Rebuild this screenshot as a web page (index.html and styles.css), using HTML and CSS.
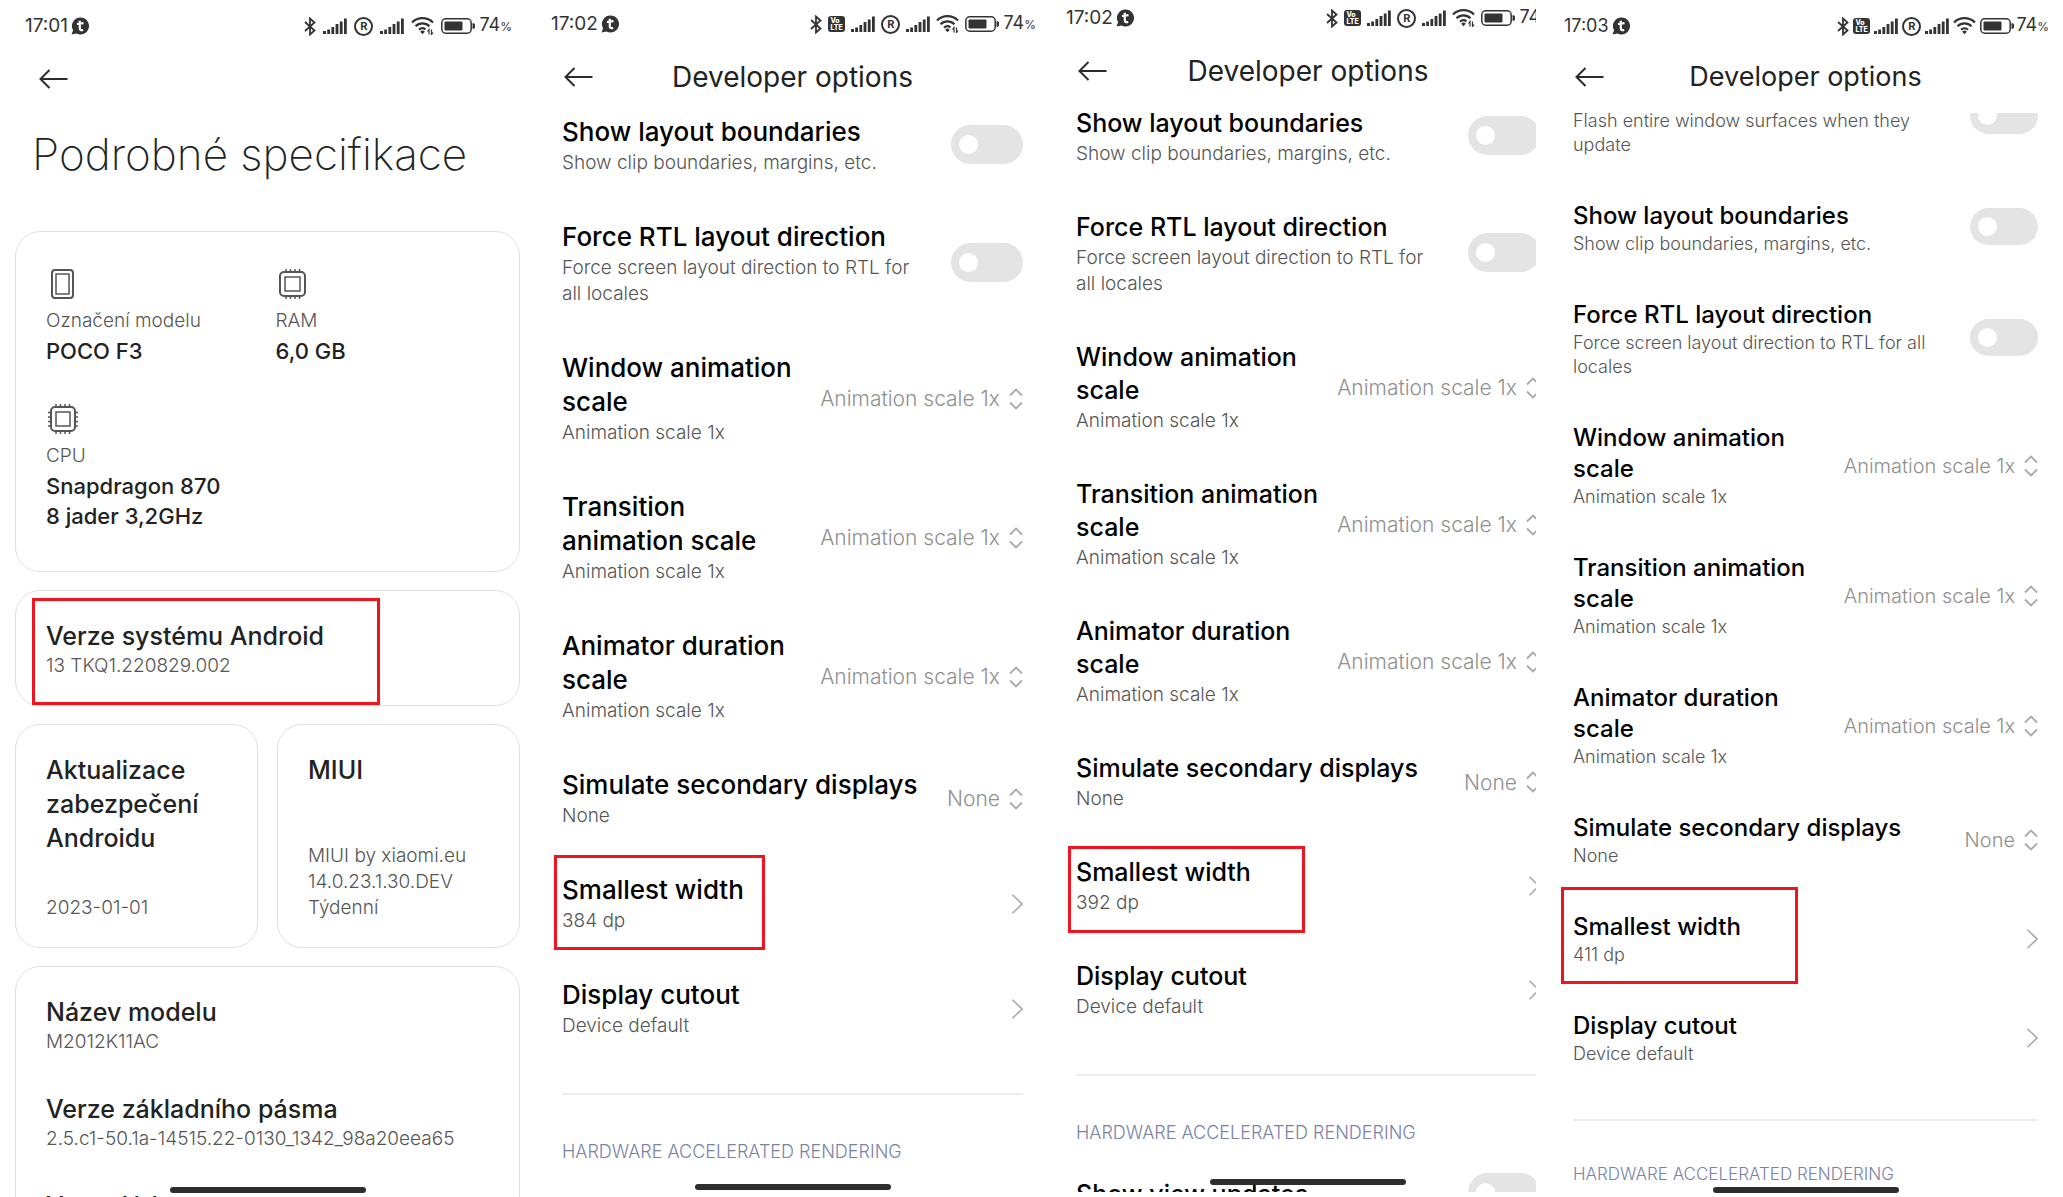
FILE: index.html
```
<!DOCTYPE html>
<html lang="en">
<head>
    <meta charset="UTF-8">
    <meta name="viewport" content="width=device-width, initial-scale=1.0">
    <title>Developer options</title>
    <link rel="stylesheet" href="styles.css">
</head>

<body>
    <!-- shared icons -->
    <svg class="sprite" aria-hidden="true">
        <symbol id="chat" viewBox="0 0 18 18">
            <path d="M9.500 0.500a8.500 8.500 0 1 1-4 16L0.500 17.500l1.600-4.200A8.500 8.500 0 0 1 9.500 0.500z" fill="#333"/>
            <path d="M8.800 3.800v7.700q0 2.200 3.400 1.500M6 7l6.500-0.800" fill="none" stroke="#fff" stroke-width="2.200"/>
        </symbol>
        <symbol id="bluetooth" viewBox="0 0 12 19">
            <path d="M1 5l9.500 8.500L6 17.500v-16l4.500 4L1 14" fill="none" stroke="#333" stroke-width="1.800"/>
        </symbol>
        <symbol id="signal" viewBox="0 0 24 16">
            <path d="M0 13h3v3H0zM4.200 11.500h2.800V16H4.200zM8.400 9h2.800v7H8.400zM12.600 6h2.800v10h-2.800zM16.800 3.500h2.800V16h-2.800zM21 0.500h2.800V16H21z" fill="#333"/>
        </symbol>
        <symbol id="wifi" viewBox="0 0 23 18">
            <path d="M1 5.500a15 15 0 0 1 21 0M4.500 9.300a10 10 0 0 1 14 0M8 12.800a5.200 5.200 0 0 1 7 0" fill="none" stroke="#333" stroke-width="2.200"/>
            <path d="M9.200 14.800a3.200 3.200 0 0 1 4.600 0l-2.300 2.400z" fill="#333"/>
        </symbol>
        <symbol id="wifi-data" viewBox="0 0 23 18">
            <path d="M1 5.500a15 15 0 0 1 21 0M4.500 9.300a10 10 0 0 1 14 0M8 12.800a5.200 5.200 0 0 1 6.500-0.500" fill="none" stroke="#333" stroke-width="2.200"/>
            <path d="M9.200 14.800a3.200 3.200 0 0 1 4.600 0l-2.300 2.400z" fill="#333"/>
            <path d="M18 17.500v-5l-1.500 2M20.500 12.500v5l1.500-2" fill="none" stroke="#333" stroke-width="1.200"/>
        </symbol>
        <symbol id="battery" viewBox="0 0 34 16">
            <rect x="0.800" y="0.800" width="29.400" height="14.400" rx="4" fill="none" stroke="#333" stroke-width="1.500"/>
            <rect x="3.500" y="3.500" width="18" height="9" rx="1" fill="#333"/>
            <path d="M32 5.500a2 2.500 0 0 1 0 5z" fill="#333" stroke="#333"/>
        </symbol>
        <symbol id="back" viewBox="0 0 29 20">
            <path d="M10.500 1L1.500 10l9 9M1.500 10h27" fill="none" stroke="#2b2b2b" stroke-width="2"/>
        </symbol>
        <symbol id="updown" viewBox="0 0 14 22">
            <path d="M1 7.500l6-6 6 6M1 14.500l6 6 6-6" fill="none" stroke="#aaa" stroke-width="1.800"/>
        </symbol>
        <symbol id="next" viewBox="0 0 12 20">
            <path d="M1.500 0.800L11 10l-9.500 9.200" fill="none" stroke="#aaa" stroke-width="1.600"/>
        </symbol>
    </svg>

    <main class="screens">
        <!-- About phone -->
        <section class="screen about" lang="cs">
            <div class="status">
                <span class="time">17:01</span>
                <svg class="i-chat"><use href="#chat"/></svg>
                <div class="status-icons">
                    <svg class="i-bt"><use href="#bluetooth"/></svg>
                    <svg class="i-signal"><use href="#signal"/></svg>
                    <span class="roaming">R</span>
                    <svg class="i-signal"><use href="#signal"/></svg>
                    <svg class="i-wifi"><use href="#wifi-data"/></svg>
                    <svg class="i-battery"><use href="#battery"/></svg>
                </div>
                <span class="percent">74<small>%</small></span>
            </div>
            <header class="appbar">
                <button class="back" aria-label="Zpět"><svg><use href="#back"/></svg></button>
            </header>
            <h1 class="page-title">Podrobné specifikace</h1>

            <div class="cards">
                <div class="card specs">
                    <div class="spec">
                        <svg class="spec-icon" viewBox="0 0 32 30">
                            <rect x="6" y="1" width="21" height="28" rx="3" fill="none" stroke="#555" stroke-width="2"/>
                            <rect x="10" y="5" width="13" height="20" fill="none" stroke="#555" stroke-width="1.500"/>
                        </svg>
                        <p class="spec-label">Označení modelu</p>
                        <p class="spec-value">POCO F3</p>
                    </div>
                    <div class="spec">
                        <svg class="spec-icon" viewBox="0 0 32 30">
                            <rect x="4" y="3" width="25" height="24" rx="4" fill="none" stroke="#555" stroke-width="2"/>
                            <rect x="9" y="8" width="15" height="14" fill="none" stroke="#555" stroke-width="1.500"/>
                            <path d="M10 0v3M14.500 0v3M19 0v3M23.500 0v3M10 27v3M14.500 27v3M19 27v3M23.500 27v3" stroke="#555" stroke-width="1.500"/>
                        </svg>
                        <p class="spec-label">RAM</p>
                        <p class="spec-value">6,0 GB</p>
                    </div>
                    <div class="spec">
                        <svg class="spec-icon" viewBox="0 0 32 30">
                            <rect x="5" y="3" width="24" height="24" rx="4" fill="none" stroke="#555" stroke-width="2"/>
                            <rect x="10" y="8" width="14" height="14" fill="none" stroke="#555" stroke-width="1.500"/>
                            <path d="M10 0v3M14.500 0v3M19 0v3M23.500 0v3M10 27v3M14.500 27v3M19 27v3M23.500 27v3M2 8.500h3M2 13h3M2 17.500h3M2 22h3M29 8.500h3M29 13h3M29 17.500h3M29 22h3" stroke="#555" stroke-width="1.500"/>
                        </svg>
                        <p class="spec-label">CPU</p>
                        <p class="spec-value">Snapdragon 870<br>8 jader 3,2GHz</p>
                    </div>
                </div>
                <div class="card marked">
                    <h2 class="title">Verze systému Android</h2>
                    <p class="sub">13 TKQ1.220829.002</p>
                </div>
                <div class="card-pair">
                    <div class="card">
                        <h2 class="title">Aktualizace zabezpečení Androidu</h2>
                        <p class="sub">2023-01-01</p>
                    </div>
                    <div class="card">
                        <h2 class="title">MIUI</h2>
                        <p class="sub">MIUI by xiaomi.eu<br>14.0.23.1.30.DEV<br>Týdenní</p>
                    </div>
                </div>
                <div class="card info">
                    <div>
                        <h2 class="title">Název modelu</h2>
                        <p class="sub">M2012K11AC</p>
                    </div>
                    <div>
                        <h2 class="title">Verze základního pásma</h2>
                        <p class="sub">2.5.c1-50.1a-14515.22-0130_1342_98a20eea65</p>
                    </div>
                    <div>
                        <h2 class="title">Verze jádra</h2>
                    </div>
                </div>
            </div>
            <div class="home"></div>
        </section>

        <!-- 384 dp -->
        <section class="screen dp384">
            <div class="status">
                <span class="time">17:02</span>
                <svg class="i-chat"><use href="#chat"/></svg>
                <div class="status-icons">
                    <svg class="i-bt"><use href="#bluetooth"/></svg>
                    <span class="volte"><span>Vo</span><span>LTE</span></span>
                    <svg class="i-signal"><use href="#signal"/></svg>
                    <span class="roaming">R</span>
                    <svg class="i-signal"><use href="#signal"/></svg>
                    <svg class="i-wifi"><use href="#wifi-data"/></svg>
                    <svg class="i-battery"><use href="#battery"/></svg>
                </div>
                <span class="percent">74<small>%</small></span>
            </div>
            <header class="appbar">
                <button class="back" aria-label="Back"><svg><use href="#back"/></svg></button>
                <h1 class="bar-title">Developer options</h1>
            </header>
            <div class="viewport">
                <div class="list">
                    <label class="row">
                        <span class="row-text"><span class="title">Show layout boundaries</span><span class="sub">Show clip boundaries, margins, etc.</span></span>
                        <input type="checkbox" class="switch">
                    </label>
                    <label class="row">
                        <span class="row-text"><span class="title">Force RTL layout direction</span><span class="sub">Force screen layout direction to RTL for all locales</span></span>
                        <input type="checkbox" class="switch">
                    </label>
                    <label class="row">
                        <span class="row-text"><span class="title">Window animation scale</span><span class="sub">Animation scale 1x</span></span>
                        <select class="value"><option>Animation scale 1x</option></select>
                        <svg class="updown"><use href="#updown"/></svg>
                    </label>
                    <label class="row">
                        <span class="row-text"><span class="title">Transition animation scale</span><span class="sub">Animation scale 1x</span></span>
                        <select class="value"><option>Animation scale 1x</option></select>
                        <svg class="updown"><use href="#updown"/></svg>
                    </label>
                    <label class="row">
                        <span class="row-text"><span class="title">Animator duration scale</span><span class="sub">Animation scale 1x</span></span>
                        <select class="value"><option>Animation scale 1x</option></select>
                        <svg class="updown"><use href="#updown"/></svg>
                    </label>
                    <label class="row">
                        <span class="row-text"><span class="title">Simulate secondary displays</span><span class="sub">None</span></span>
                        <select class="value"><option>None</option></select>
                        <svg class="updown"><use href="#updown"/></svg>
                    </label>
                    <a class="row marked" href="#">
                        <span class="row-text"><span class="title">Smallest width</span><span class="sub">384 dp</span></span>
                        <svg class="next"><use href="#next"/></svg>
                    </a>
                    <a class="row" href="#">
                        <span class="row-text"><span class="title">Display cutout</span><span class="sub">Device default</span></span>
                        <svg class="next"><use href="#next"/></svg>
                    </a>
                    <h2 class="group">HARDWARE ACCELERATED RENDERING</h2>
                </div>
            </div>
            <div class="home"></div>
        </section>

        <!-- 392 dp, runs off the right side -->
        <section class="screen dp392">
            <div class="inner">
                <div class="status">
                    <span class="time">17:02</span>
                    <svg class="i-chat"><use href="#chat"/></svg>
                    <div class="status-icons">
                        <svg class="i-bt"><use href="#bluetooth"/></svg>
                        <span class="volte"><span>Vo</span><span>LTE</span></span>
                        <svg class="i-signal"><use href="#signal"/></svg>
                        <span class="roaming">R</span>
                        <svg class="i-signal"><use href="#signal"/></svg>
                        <svg class="i-wifi"><use href="#wifi-data"/></svg>
                        <svg class="i-battery"><use href="#battery"/></svg>
                    </div>
                    <span class="percent">74<small>%</small></span>
                </div>
                <header class="appbar">
                    <button class="back" aria-label="Back"><svg><use href="#back"/></svg></button>
                    <h1 class="bar-title">Developer options</h1>
                </header>
                <div class="viewport">
                    <div class="list">
                        <label class="row">
                            <span class="row-text"><span class="title">Show layout boundaries</span><span class="sub">Show clip boundaries, margins, etc.</span></span>
                            <input type="checkbox" class="switch">
                        </label>
                        <label class="row">
                            <span class="row-text"><span class="title">Force RTL layout direction</span><span class="sub">Force screen layout direction to RTL for all locales</span></span>
                            <input type="checkbox" class="switch">
                        </label>
                        <label class="row">
                            <span class="row-text"><span class="title">Window animation scale</span><span class="sub">Animation scale 1x</span></span>
                            <select class="value"><option>Animation scale 1x</option></select>
                            <svg class="updown"><use href="#updown"/></svg>
                        </label>
                        <label class="row">
                            <span class="row-text"><span class="title">Transition animation scale</span><span class="sub">Animation scale 1x</span></span>
                            <select class="value"><option>Animation scale 1x</option></select>
                            <svg class="updown"><use href="#updown"/></svg>
                        </label>
                        <label class="row">
                            <span class="row-text"><span class="title">Animator duration scale</span><span class="sub">Animation scale 1x</span></span>
                            <select class="value"><option>Animation scale 1x</option></select>
                            <svg class="updown"><use href="#updown"/></svg>
                        </label>
                        <label class="row">
                            <span class="row-text"><span class="title">Simulate secondary displays</span><span class="sub">None</span></span>
                            <select class="value"><option>None</option></select>
                            <svg class="updown"><use href="#updown"/></svg>
                        </label>
                        <a class="row marked" href="#">
                            <span class="row-text"><span class="title">Smallest width</span><span class="sub">392 dp</span></span>
                            <svg class="next"><use href="#next"/></svg>
                        </a>
                        <a class="row" href="#">
                            <span class="row-text"><span class="title">Display cutout</span><span class="sub">Device default</span></span>
                            <svg class="next"><use href="#next"/></svg>
                        </a>
                        <h2 class="group">HARDWARE ACCELERATED RENDERING</h2>
                        <label class="row">
                            <span class="row-text"><span class="title">Show view updates</span></span>
                            <input type="checkbox" class="switch">
                        </label>
                    </div>
                </div>
                <div class="home"></div>
            </div>
        </section>

        <!-- 411 dp -->
        <section class="screen dp411">
            <div class="status">
                <span class="time">17:03</span>
                <svg class="i-chat"><use href="#chat"/></svg>
                <div class="status-icons">
                    <svg class="i-bt"><use href="#bluetooth"/></svg>
                    <span class="volte"><span>Vo</span><span>LTE</span></span>
                    <svg class="i-signal"><use href="#signal"/></svg>
                    <span class="roaming">R</span>
                    <svg class="i-signal"><use href="#signal"/></svg>
                    <svg class="i-wifi"><use href="#wifi"/></svg>
                    <svg class="i-battery"><use href="#battery"/></svg>
                </div>
                <span class="percent">74<small>%</small></span>
            </div>
            <header class="appbar">
                <button class="back" aria-label="Back"><svg><use href="#back"/></svg></button>
                <h1 class="bar-title">Developer options</h1>
            </header>
            <div class="viewport">
                <div class="list">
                    <label class="row row-cut">
                        <span class="row-text"><span class="sub">Flash entire window surfaces when they update</span></span>
                        <input type="checkbox" class="switch">
                    </label>
                    <label class="row">
                        <span class="row-text"><span class="title">Show layout boundaries</span><span class="sub">Show clip boundaries, margins, etc.</span></span>
                        <input type="checkbox" class="switch">
                    </label>
                    <label class="row">
                        <span class="row-text"><span class="title">Force RTL layout direction</span><span class="sub">Force screen layout direction to RTL for all locales</span></span>
                        <input type="checkbox" class="switch">
                    </label>
                    <label class="row">
                        <span class="row-text"><span class="title">Window animation scale</span><span class="sub">Animation scale 1x</span></span>
                        <select class="value"><option>Animation scale 1x</option></select>
                        <svg class="updown"><use href="#updown"/></svg>
                    </label>
                    <label class="row">
                        <span class="row-text"><span class="title">Transition animation scale</span><span class="sub">Animation scale 1x</span></span>
                        <select class="value"><option>Animation scale 1x</option></select>
                        <svg class="updown"><use href="#updown"/></svg>
                    </label>
                    <label class="row">
                        <span class="row-text"><span class="title">Animator duration scale</span><span class="sub">Animation scale 1x</span></span>
                        <select class="value"><option>Animation scale 1x</option></select>
                        <svg class="updown"><use href="#updown"/></svg>
                    </label>
                    <label class="row">
                        <span class="row-text"><span class="title">Simulate secondary displays</span><span class="sub">None</span></span>
                        <select class="value"><option>None</option></select>
                        <svg class="updown"><use href="#updown"/></svg>
                    </label>
                    <a class="row marked" href="#">
                        <span class="row-text"><span class="title">Smallest width</span><span class="sub">411 dp</span></span>
                        <svg class="next"><use href="#next"/></svg>
                    </a>
                    <a class="row" href="#">
                        <span class="row-text"><span class="title">Display cutout</span><span class="sub">Device default</span></span>
                        <svg class="next"><use href="#next"/></svg>
                    </a>
                    <h2 class="group">HARDWARE ACCELERATED RENDERING</h2>
                </div>
            </div>
            <div class="home"></div>
        </section>
    </main>
</body>
</html>
```
FILE: styles.css
```
*, *::before, *::after {
    box-sizing: border-box;
}

body {
    margin: 0;
    background-color: #fff;
    color: #222;
    font-family: Inter, Roboto, sans-serif;
}

h1, h2, p {
    margin: 0;
    font-weight: 400;
}

svg {
    display: block;
    flex: none;
}

.sprite {
    display: none;
}

.screens {
    display: grid;
    grid-template-columns: 535fr 515fr 486fr 527fr;
    height: 100vh;
    overflow: hidden;
}

.screen {
    --title: 25px;
    --title-line: 34px;
    --sub: 19px;
    --sub-line: 26px;
    --value: 21px;
    --side: 27px;
    --status-side: 16px;
    --bar: 78px;
    display: flex;
    flex-direction: column;
    position: relative;
    min-width: 0;
    min-height: 0;
    overflow: hidden;
}

.about {
    --status-side: 25px;
    --side: 37px;
    padding-top: 12px;
}

.dp384 {
    --title: 26px;
    --scroll: -23px;
    padding-top: 10px;
}

.dp392 {
    --title-line: 33px;
    --side: 26px;
    --scroll: -25px;
    padding-top: 4px;
    margin-bottom: 5px;
}

.dp411 {
    --title: 24px;
    --title-line: 31px;
    --sub: 18px;
    --sub-line: 24px;
    --value: 20px;
    --side: 25px;
    --bar: 73px;
    --scroll: -58px;
    padding-top: 12px;
    margin-left: 12px;
}

.inner {
    display: flex;
    flex-direction: column;
    flex: 1;
    position: relative;
    width: calc(100% + 30px);
    min-height: 0;
}

/* status bar */
.status {
    display: flex;
    align-items: center;
    flex: none;
    height: 28px;
    padding-left: var(--status-side);
    padding-right: calc(var(--status-side) - 2px);
    color: #333;
}

.time, .percent {
    font-size: 19px;
    line-height: 28px;
}

.percent {
    font-size: 18px;
}

.percent small {
    font-size: 12px;
}

.status-icons {
    display: flex;
    align-items: center;
    gap: 6px;
    margin-left: auto;
    margin-right: 4px;
}

.about .status-icons {
    gap: 7px;
}

.dp411 .status-icons {
    gap: 4px;
    margin-right: 2px;
}

.i-chat {
    width: 18px;
    height: 18px;
    margin-left: 3px;
}

.dp411 .time {
    font-size: 18px;
}

.i-bt {
    width: 12px;
    height: 19px;
}

.volte {
    display: flex;
    flex-direction: column;
    justify-content: center;
    width: 17px;
    height: 16px;
    padding-left: 2px;
    border-radius: 3px;
    background-color: #333;
    color: #fff;
    font-size: 7px;
    font-weight: 800;
    line-height: 7px;
}

.i-signal {
    width: 24px;
    height: 16px;
}

.roaming {
    display: flex;
    align-items: center;
    justify-content: center;
    width: 19px;
    height: 19px;
    border: 2px solid #333;
    border-radius: 50%;
    font-size: 11px;
    font-weight: 700;
    line-height: 14px;
}

.i-wifi {
    width: 23px;
    height: 18px;
}

.i-battery {
    width: 34px;
    height: 16px;
}

/* app bar */
.appbar {
    display: grid;
    grid-template-columns: 1fr auto 1fr;
    align-items: center;
    flex: none;
    height: var(--bar);
    padding: 0 var(--side);
}

.back {
    justify-self: start;
    padding: 0 2px;
    border: none;
    background: none;
    cursor: pointer;
}

.back svg {
    width: 29px;
    height: 20px;
}

.bar-title {
    font-size: 28px;
    line-height: 36px;
}

.dp411 .bar-title {
    font-size: 27px;
}

/* settings list */
.viewport {
    flex: 1;
    min-height: 0;
    overflow: hidden;
}

.list {
    margin-top: var(--scroll);
    padding: 0 var(--side);
}

.row {
    display: flex;
    align-items: center;
    position: relative;
    padding: 22px 0;
    color: #000;
    text-decoration: none;
}

.dp411 .row {
    padding-bottom: 21px;
}

.row-text {
    flex: 1;
    min-width: 0;
    padding-right: 16px;
}

.row-text .sub {
    margin-top: 1px;
}

.row-cut .row-text {
    padding-top: var(--title-line);
}

.title, .sub {
    display: block;
}

.title {
    font-size: var(--title);
    line-height: var(--title-line);
    font-weight: 500;
}

.sub {
    font-size: var(--sub);
    line-height: var(--sub-line);
    font-weight: 300;
    color: #555;
}

.value {
    appearance: none;
    padding: 0;
    border: none;
    background: none;
    font-family: inherit;
    font-size: var(--value);
    font-weight: 300;
    color: #909090;
    text-align: right;
}

.updown {
    width: 14px;
    height: 22px;
    margin-left: 9px;
}

.next {
    width: 12px;
    height: 20px;
}

.switch {
    appearance: none;
    flex: none;
    display: flex;
    align-items: center;
    width: 72px;
    height: 39px;
    margin: 0 0 3px 12px;
    padding-left: 8px;
    border-radius: 20px;
    background-color: #e4e4e4;
}

.switch::before {
    content: "";
    width: 19px;
    height: 19px;
    border-radius: 50%;
    background-color: #fff;
}

.dp411 .switch {
    width: 68px;
    height: 37px;
}

.group {
    margin-top: 32px;
    padding: 44px 0 5px;
    border-top: 2px solid #ececec;
    font-size: 18px;
    line-height: 26px;
    font-weight: 300;
    color: #7a82a8;
}

.dp411 .group {
    padding-top: 40px;
    font-size: 17px;
}

/* highlighted item */
.marked {
    position: relative;
}

.marked::after {
    content: "";
    position: absolute;
    border: 3px solid #f0141e;
}

.about .marked::after {
    top: 7px;
    left: 16px;
    width: 348px;
    height: 107px;
}

.dp384 .marked::after {
    top: 4px;
    left: -8px;
    width: 211px;
    height: 95px;
}

.dp392 .marked::after {
    top: 12px;
    left: -8px;
    width: 237px;
    height: 87px;
}

.dp411 .marked::after {
    top: -2px;
    left: -12px;
    width: 237px;
    height: 97px;
}

/* specifications */
.page-title {
    padding: 4px 32px 45px;
    font-size: 44px;
    line-height: 64px;
    font-weight: 200;
}

.cards {
    display: flex;
    flex-direction: column;
    gap: 18px;
    padding: 0 15px;
}

.card {
    padding: 28px 30px 26px;
    border: 1px solid #e0e0e0;
    border-radius: 25px;
}

.specs {
    display: grid;
    grid-template-columns: 1fr 1fr;
    gap: 38px 16px;
    padding: 37px 30px 40px;
}

.spec-icon {
    width: 32px;
    height: 30px;
    margin-bottom: 9px;
}

.spec-label {
    margin-bottom: 2px;
    font-size: 19px;
    line-height: 26px;
    font-weight: 300;
    color: #555;
}

.spec-value {
    font-size: 22px;
    line-height: 30px;
    font-weight: 500;
}

.card-pair {
    display: grid;
    grid-template-columns: 1fr 1fr;
    gap: 19px;
}

.card-pair .card {
    display: flex;
    flex-direction: column;
    justify-content: space-between;
    gap: 40px;
}

.info {
    display: flex;
    flex-direction: column;
    gap: 37px;
}

/* gesture bar */
.home {
    position: absolute;
    left: 50%;
    bottom: 7px;
    width: 196px;
    height: 6px;
    margin-left: -98px;
    border-radius: 3px;
    background-color: #2e2e2e;
}

.about .home {
    bottom: 4px;
}

.dp411 .home {
    bottom: 4px;
    width: 186px;
    margin-left: -93px;
}
```
